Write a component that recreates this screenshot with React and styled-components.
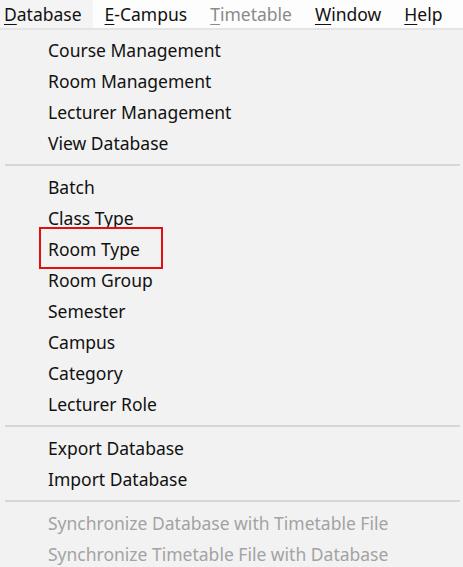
import React from 'react';
import styled, { createGlobalStyle } from 'styled-components';

const GlobalStyle = createGlobalStyle`
  html, body {
    margin: 0;
    padding: 0;
    background: #f2f2f2;
  }
  body {
    font-family: "Noto Sans", "Open Sans", sans-serif;
  }
`;

const Page = styled.div`
  width: 463px;
  height: 567px;
  overflow: hidden;
  background: #f2f2f2;
`;

const MenuBar = styled.div`
  display: flex;
  height: 30px;
  background: #fdfdfd;
  border-bottom: 2px solid #e4e4e4;
  box-sizing: border-box;
`;

const BarItem = styled.div`
  display: flex;
  align-items: center;
  flex-shrink: 0;
  white-space: nowrap;
  padding: 0 11px 0 4px;
  margin-right: 8px;
  height: 100%;
  font-size: 17.5px;
  color: ${props => (props.disabled ? '#8a8a8a' : '#111')};
  background: ${props => (props.active ? '#f4f4f4' : 'transparent')};

  u {
    text-underline-offset: 3px;
  }
`;

const Dropdown = styled.div`
  display: flex;
  flex-direction: column;
  padding-top: 4px;
`;

const Item = styled.div`
  height: 31px;
  display: flex;
  align-items: center;
  white-space: nowrap;
  padding-left: 48px;
  font-size: 17.5px;
  color: ${props => (props.disabled ? '#a3a3a3' : '#111')};
`;

const Highlight = styled.span`
  position: relative;

  &::after {
    content: '';
    position: absolute;
    left: -9px;
    top: -10px;
    width: 124px;
    height: 42px;
    border: 2px solid #e01010;
    box-sizing: border-box;
  }
`;

const Separator = styled.div`
  height: 13px;
  display: flex;
  align-items: center;
  padding: 0 3px 0 5px;

  &::before {
    content: '';
    flex: 1;
    height: 2px;
    background: #d6d6d6;
  }
`;

const barItems = [
  { key: 'D', rest: 'atabase', active: true },
  { key: 'E', rest: '-Campus' },
  { key: 'T', rest: 'imetable', disabled: true },
  { key: 'W', rest: 'indow' },
  { key: 'H', rest: 'elp' },
];

const groups = [
  ['Course Management', 'Room Management', 'Lecturer Management', 'View Database'],
  ['Batch', 'Class Type', 'Room Type', 'Room Group', 'Semester', 'Campus', 'Category', 'Lecturer Role'],
  ['Export Database', 'Import Database'],
];

const disabledItems = [
  'Synchronize Database with Timetable File',
  'Synchronize Timetable File with Database',
];

export default function App() {
  return (
    <Page>
      <GlobalStyle />
      <MenuBar>
        {barItems.map(b => (
          <BarItem key={b.key} active={b.active} disabled={b.disabled}>
            <span><u>{b.key}</u>{b.rest}</span>
          </BarItem>
        ))}
      </MenuBar>
      <Dropdown>
        {groups.map((g, i) => (
          <React.Fragment key={i}>
            {g.map(label => (
              <Item key={label}>
                {label === 'Room Type' ? <Highlight>{label}</Highlight> : label}
              </Item>
            ))}
            <Separator />
          </React.Fragment>
        ))}
        {disabledItems.map(label => (
          <Item key={label} disabled>{label}</Item>
        ))}
      </Dropdown>
    </Page>
  );
}
